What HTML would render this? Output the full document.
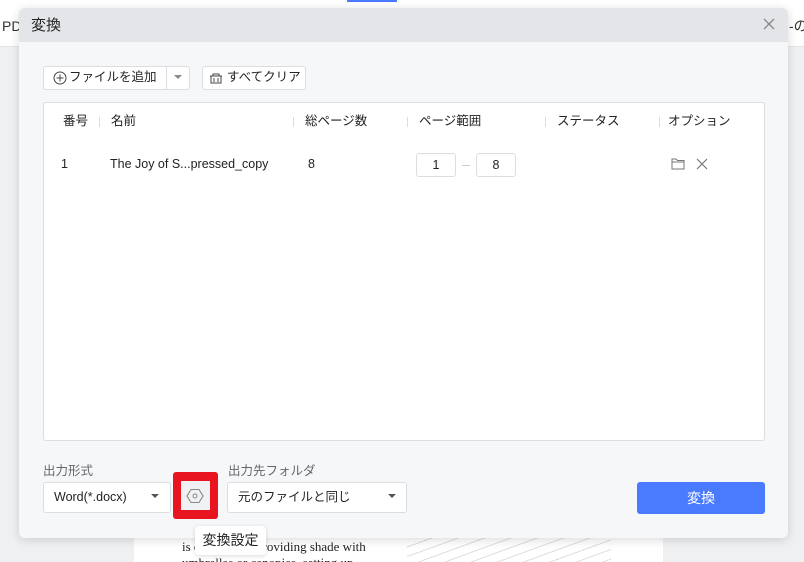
<!DOCTYPE html>
<html><head><meta charset="utf-8"><style>
*{box-sizing:border-box;margin:0;padding:0}
html,body{width:804px;height:562px;overflow:hidden}
body{background:#eff0f2;font-family:"Liberation Sans","Noto Sans CJK JP",sans-serif;font-size:12.5px;color:#222;position:relative;line-height:1.2}
.abs{position:absolute;white-space:nowrap}
.top{left:0;top:0;width:804px;height:47px;background:#fff;border-bottom:1px solid #e3e4e7}
.dlg{left:19px;top:8px;width:769px;height:530px;background:#f6f7f9;border-radius:6px;box-shadow:0 2px 10px rgba(0,0,0,.15);overflow:hidden}
.hdr{left:0;top:0;width:769px;height:34px;background:#e4e5e9}
.btn{background:#fff;border:1px solid #dcdde1;border-radius:3px}
.th{top:114px;color:#222}
.sep{width:1px;height:10px;background:#ddd;top:117px}
.lbl{color:#666}
</style></head><body>
<div class="abs top"></div>
<div class="abs" style="left:347px;top:0;width:50px;height:2px;background:#4a7bff"></div>
<div class="abs" style="left:2px;top:18px;font-size:14px;color:#333">PD</div>
<div class="abs" style="left:789px;top:18px;font-size:14px;color:#333">-の</div>
<div class="abs" style="left:134px;top:538px;width:529px;height:24px;background:#fff"></div>
<div class="abs" style="left:407px;top:538px;width:204px;height:24px;background:repeating-linear-gradient(160deg,#fff 0 8px,#ddd 8px 9px)"></div>
<div class="abs" style="left:182px;top:539px;font-family:'Liberation Serif',serif;font-size:13px;color:#222;line-height:16px">is c&nbsp;&nbsp;&nbsp;&nbsp;&nbsp;&nbsp;&nbsp;&nbsp;&nbsp;&nbsp;&nbsp;&nbsp;nt. Providing shade with<br>umbrellas or canopies, setting up</div>
<div class="abs dlg">
 <div class="abs hdr"></div>
 <div class="abs" style="left:12px;top:9px;font-size:15px;color:#222">変換</div>
 <svg class="abs" style="left:743px;top:9px" width="14" height="14"><path d="M2 2L12 12M12 2L2 12" stroke="#888" stroke-width="1.3"/></svg>
</div>
<div class="abs btn" style="left:43px;top:66px;width:147px;height:24px"></div>
<div class="abs" style="left:166px;top:67px;width:1px;height:22px;background:#dcdde1"></div>
<svg class="abs" style="left:53px;top:71px" width="14" height="14"><circle cx="7" cy="7" r="6" fill="none" stroke="#444"/><path d="M7 3.5v7M3.5 7h7" stroke="#444"/></svg>
<div class="abs" style="left:69px;top:70px">ファイルを追加</div>
<svg class="abs" style="left:174px;top:75px" width="8" height="5"><path d="M0 0h8L4 4z" fill="#888"/></svg>
<div class="abs btn" style="left:202px;top:66px;width:104px;height:24px"></div>
<svg class="abs" style="left:209px;top:71px" width="14" height="14"><path d="M2 5h10v7H2zM4 5V3h6v2M1 5h12M5 7v4M9 7v4" fill="none" stroke="#444"/></svg>
<div class="abs" style="left:227px;top:70px">すべてクリア</div>
<div class="abs" style="left:43px;top:102px;width:722px;height:339px;background:#fff;border:1px solid #dcdde1;border-radius:3px"></div>
<div class="abs th" style="left:63px">番号</div>
<div class="abs sep" style="left:99px"></div>
<div class="abs th" style="left:111px">名前</div>
<div class="abs sep" style="left:293px"></div>
<div class="abs th" style="left:305px">総ページ数</div>
<div class="abs sep" style="left:407px"></div>
<div class="abs th" style="left:419px">ページ範囲</div>
<div class="abs sep" style="left:545px"></div>
<div class="abs th" style="left:557px">ステータス</div>
<div class="abs sep" style="left:659px"></div>
<div class="abs th" style="left:668px">オプション</div>
<div class="abs" style="left:61px;top:157px">1</div>
<div class="abs" style="left:110px;top:157px">The Joy of S...pressed_copy</div>
<div class="abs" style="left:308px;top:157px">8</div>
<div class="abs btn" style="left:416px;top:153px;width:40px;height:24px;text-align:center;line-height:22px">1</div>
<div class="abs" style="left:462px;top:165px;width:8px;height:1px;background:#ccc"></div>
<div class="abs btn" style="left:476px;top:153px;width:40px;height:24px;text-align:center;line-height:22px">8</div>
<svg class="abs" style="left:671px;top:158px" width="14" height="12"><path d="M1 1h4l1.5 1.5H13V11H1zM1 4h12" fill="none" stroke="#777"/></svg>
<svg class="abs" style="left:696px;top:158px" width="12" height="12"><path d="M1 1l10 10M11 1L1 11" stroke="#777" stroke-width="1.2"/></svg>
<div class="abs lbl" style="left:43px;top:464px">出力形式</div>
<div class="abs btn" style="left:43px;top:482px;width:128px;height:31px"></div>
<div class="abs" style="left:54px;top:490px">Word(*.docx)</div>
<svg class="abs" style="left:151px;top:494px" width="8" height="5"><path d="M0 0h8L4 4z" fill="#555"/></svg>
<div class="abs" style="left:173px;top:472px;width:45px;height:47px;background:#e8141f;border-radius:3px"></div>
<div class="abs" style="left:181px;top:481px;width:29px;height:29px;background:#f0f1f3"></div>
<svg class="abs" style="left:186px;top:488px" width="18" height="16"><path d="M5 1.5h8l4 6.5-4 6.5H5L1 8z" fill="none" stroke="#888" stroke-width="1.1"/><circle cx="9" cy="8" r="2" fill="none" stroke="#888"/></svg>
<div class="abs lbl" style="left:228px;top:464px">出力先フォルダ</div>
<div class="abs btn" style="left:227px;top:482px;width:180px;height:31px"></div>
<div class="abs" style="left:238px;top:490px">元のファイルと同じ</div>
<svg class="abs" style="left:388px;top:494px" width="8" height="5"><path d="M0 0h8L4 4z" fill="#555"/></svg>
<div class="abs" style="left:637px;top:482px;width:128px;height:32px;background:#4a7bff;border-radius:3px;color:#fff;text-align:center;line-height:32px;font-size:14px">変換</div>
<div class="abs" style="left:195px;top:526px;width:71px;height:29px;background:#fff;border-radius:4px;box-shadow:0 1px 4px rgba(0,0,0,.15);text-align:center;line-height:29px;font-size:14px">変換設定</div>
</body></html>
